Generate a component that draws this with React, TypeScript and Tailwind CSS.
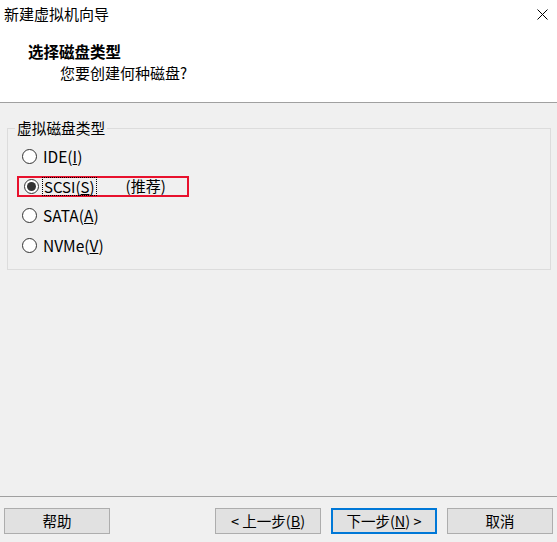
import React from "react";

const font = { fontFamily: '"Noto Sans CJK SC", "Noto Sans", sans-serif' };

function Radio({ checked }: { checked?: boolean }) {
  return (
    <span className="w-[15px] h-[15px] rounded-full border border-[#333333] bg-white flex items-center justify-center flex-shrink-0">
      {checked && <span className="w-[9px] h-[9px] rounded-full bg-[#333333]" />}
    </span>
  );
}

function Btn({ children, primary }: { children: React.ReactNode; primary?: boolean }) {
  return (
    <button
      className={`h-[26px] w-[106px] bg-[#e1e1e1] text-[14.5px] text-black flex items-center justify-center leading-none ${
        primary ? "border-2 border-[#0078d7]" : "border border-[#adadad]"
      }`}
    >
      {children}
    </button>
  );
}

export default function App() {
  const items = [
    { label: "IDE", key: "I" },
    { label: "SCSI", key: "S", checked: true },
    { label: "SATA", key: "A" },
    { label: "NVMe", key: "V" },
  ];

  return (
    <div className="w-[557px] h-[542px] bg-[#f0f0f0] flex flex-col text-black" style={font}>
      {/* Header */}
      <div className="h-[103px] bg-white border-b border-[#a0a0a0] flex flex-col">
        <div className="h-[28px] flex items-center justify-between pl-[4px] pr-[9px]">
          <span className="text-[15px]">新建虚拟机向导</span>
          <svg width="11" height="11" viewBox="0 0 11 11" className="text-black">
            <path d="M0.5 0.5 L10.5 10.5 M10.5 0.5 L0.5 10.5" stroke="currentColor" strokeWidth="1" />
          </svg>
        </div>
        <div className="pt-[12px] pl-[28px] text-[15.5px] font-bold leading-[22px]">选择磁盘类型</div>
        <div className="pl-[60px] text-[15px] leading-[22px]">您要创建何种磁盘?</div>
      </div>

      {/* Content */}
      <div className="flex-1">
        <div className="relative mt-[25px] ml-[7px] w-[544px] h-[142px] border border-[#dcdcdc]">
          <span className="absolute -top-[12px] left-[7px] px-[2px] bg-[#f0f0f0] text-[14.7px] leading-[22px]">
            虚拟磁盘类型
          </span>
          <div className="pt-[13px] pl-[14px] flex flex-col">
            {items.map((it) => (
              <div key={it.label} className="h-[29.5px] flex items-center">
                {it.checked ? (
                  <div className="relative flex items-center -ml-[5px] pl-[5px] w-[172px] h-[21px] border-2 border-[#e8112d]">
                    <Radio checked />
                    <span className="ml-[3px] px-[1px] border border-dotted border-black text-[15px] leading-[17px]">
                      {it.label}(<span className="underline">{it.key}</span>)
                    </span>
                    <span className="ml-[29px] text-[15px]">(推荐)</span>
                  </div>
                ) : (
                  <>
                    <Radio />
                    <span className="ml-[6px] text-[15.5px]">
                      {it.label}(<span className="underline">{it.key}</span>)
                    </span>
                  </>
                )}
              </div>
            ))}
          </div>
        </div>
      </div>

      {/* Footer */}
      <div className="h-[46px] border-t border-[#a0a0a0] pt-[11px] px-[4px] flex items-start">
        <Btn>帮助</Btn>
        <div className="ml-auto flex gap-[10px]">
          <Btn>&lt; 上一步(<span className="underline">B</span>)</Btn>
          <Btn primary>
            下一步(<span className="underline">N</span>) &gt;
          </Btn>
          <Btn>取消</Btn>
        </div>
      </div>
    </div>
  );
}
